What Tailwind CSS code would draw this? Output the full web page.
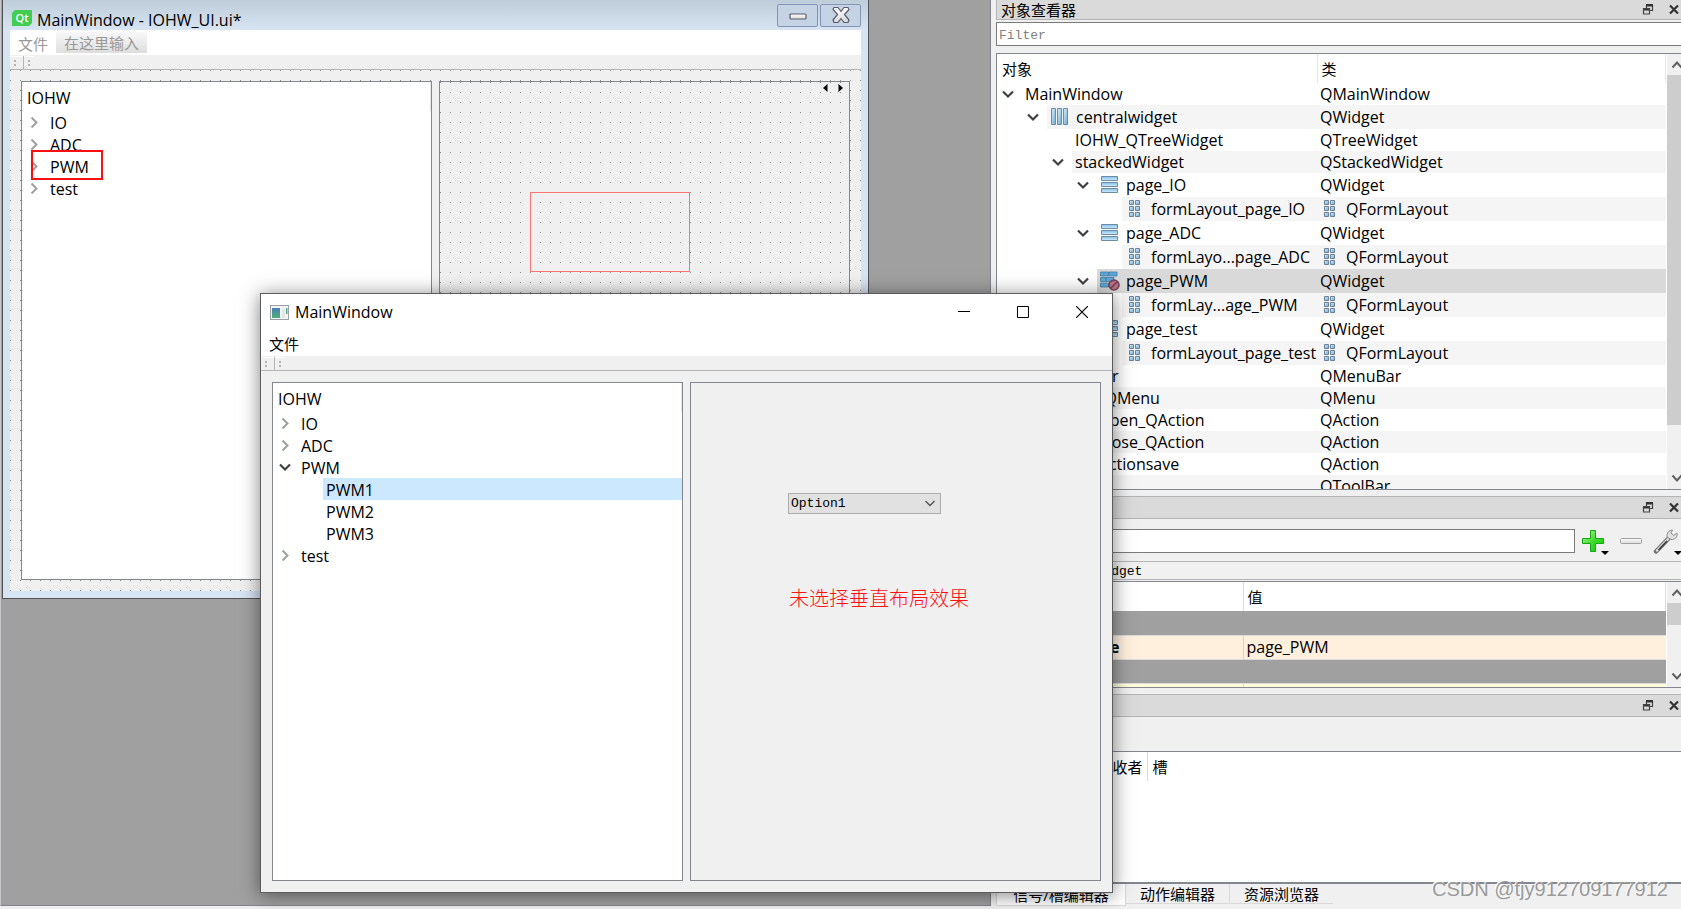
<!DOCTYPE html>
<html lang="zh-CN">
<head>
<meta charset="utf-8">
<title>Qt Designer</title>
<script src="https://cdn.jsdelivr.net/npm/@tailwindcss/browser@4"></script>
</head>
<body class="h-screen overflow-hidden bg-[#f0f0f0] font-['Open_Sans','Noto_Sans_CJK_SC',sans-serif] text-base leading-5 text-black">
<svg class="absolute h-0 w-0" aria-hidden="true">
  <defs>
    <linearGradient id="blueV" x1="0" y1="0" x2="0" y2="1"><stop offset="0" stop-color="#7cc0ea"/><stop offset="1" stop-color="#d4edfa"/></linearGradient>
    <linearGradient id="blueH" x1="0" y1="0" x2="1" y2="1"><stop offset="0" stop-color="#d6effc"/><stop offset="1" stop-color="#6eabd6"/></linearGradient>
    <linearGradient id="green" x1="0" y1="0" x2="1" y2="1"><stop offset="0" stop-color="#c4f5b4"/><stop offset=".5" stop-color="#3fdc2c"/><stop offset="1" stop-color="#0cc80a"/></linearGradient>
    <linearGradient id="metal" x1="0" y1="0" x2="0" y2="1"><stop offset="0" stop-color="#ffffff"/><stop offset="1" stop-color="#d9d9d9"/></linearGradient>
    <linearGradient id="app" x1="0" y1="0" x2="0" y2="1"><stop offset="0" stop-color="#4a7fb5"/><stop offset="1" stop-color="#4fae7b"/></linearGradient>
  </defs>
  <symbol id="right" viewBox="0 0 12 12"><path d="M3.500 1.500l5 5-5 5" fill="none" stroke="#a0a0a0" stroke-width="2"/></symbol>
  <symbol id="down" viewBox="0 0 12 12"><path d="M1 3.500l5 5 5-5" fill="none" stroke="#404040" stroke-width="2.200"/></symbol>
  <symbol id="sup" viewBox="0 0 12 12"><path d="M1.500 8.500l4.500-5 4.500 5" fill="none" stroke="#606060" stroke-width="2"/></symbol>
  <symbol id="sdown" viewBox="0 0 12 12"><path d="M1.500 2.500l4.500 5 4.500-5" fill="none" stroke="#606060" stroke-width="2"/></symbol>
  <symbol id="hbox" viewBox="0 0 20 20"><g fill="url(#blueH)" stroke="#6f8aa5"><path d="M1.500 1.500h4v16h-4z"/><path d="M7.500 1.500h4v16h-4z"/><path d="M13.500 1.500h4v16h-4z"/></g></symbol>
  <symbol id="vbox" viewBox="0 0 20 20"><g fill="url(#blueV)" stroke="#6f8aa5"><path d="M1.500 1.500h16v4h-16z"/><path d="M1.500 7.500h16v4h-16z"/><path d="M1.500 13.500h16v4h-16z"/></g></symbol>
  <symbol id="form" viewBox="0 0 20 20"><g fill="url(#blueH)" stroke="#6d8299"><path d="M4.500 1.500h4v4h-4z"/><path d="M10.500 1.500h4v4h-4z"/><path d="M4.500 7.500h4v4h-4z"/><path d="M10.500 7.500h4v4h-4z"/><path d="M4.500 13.500h4v4h-4z"/><path d="M10.500 13.500h4v4h-4z"/></g></symbol>
  <symbol id="nolayout" viewBox="0 0 20 20"><g fill="#58a9de" stroke="#4a7899" stroke-width=".8"><path d="M.5 1h8v4h-8zM9 1h8v4H9zM.5 6.500h5v4h-5zM6 6.500h8v4H6zM.5 12h8v4h-8z"/></g><circle cx="14" cy="14" r="5" fill="#a8516a" fill-opacity=".75" stroke="#7b4358" stroke-width="1.600"/><path d="M10.500 17.500l7-7" stroke="#75405a" stroke-width="1.600"/></symbol>
  <symbol id="float" viewBox="0 0 12 12"><path d="M4.500 4V1.500h6v5H8" fill="none" stroke="#444" stroke-width="1.200"/><path d="M4 0h7v2.500H4zM1 4h7v2.500H1z" fill="#333"/><path d="M1.500 4.500h6v5.500h-6z" fill="none" stroke="#444" stroke-width="1.200"/></symbol>
  <symbol id="x" viewBox="0 0 12 12"><path d="M2 1.500l8 8M10 1.500l-8 8" stroke="#333" stroke-width="2.200"/></symbol>
</svg>

<div class="relative flex h-full w-full">
  <!-- Form editor area -->
  <main class="relative mb-[3px] min-w-0 flex-1 border-r border-b border-l border-[#82828c] border-l-[#c8c8cc] bg-[#a0a0a0]">
    <section class="absolute top-0 left-px flex h-[599px] w-[867px] flex-col border border-t-0 border-[#50545a] bg-[#d7e4f2] px-[7px] pb-[7px]">
      <header class="-mx-[7px] flex h-[30px] shrink-0 items-center bg-linear-to-b from-[#bfccda] to-[#d7e4f1] pr-[7px] pl-[9px]">
        <svg class="mt-[6px] h-4 w-5" viewBox="0 0 20 16"><path d="M3 0h17v13l-3 3H0V3z" fill="#41cd52"/><text x="3.500" y="12" font-family="Open Sans" font-weight="600" font-size="11" fill="#fff">Qt</text></svg>
        <h1 class="mt-[9px] ml-[5px] flex-1">MainWindow - IOHW_UI.ui*</h1>
        <div class="flex gap-[2px]">
          <button aria-label="最小化" class="flex h-[23px] w-[41px] items-center justify-center rounded-xs border border-[#8494b4] bg-[#c5d3e4]"><svg class="mt-1 h-2 w-[18px]" viewBox="0 0 18 8"><rect x="1" y="1" width="16" height="5" rx="1" fill="url(#metal)" stroke="#585c6c" stroke-width="1.200"/></svg></button>
          <button aria-label="关闭" class="flex h-[23px] w-[41px] items-center justify-center rounded-xs border border-[#8494b4] bg-[#c5d3e4]"><svg class="h-[18px] w-[18px]" viewBox="0 0 18 18"><path d="M2 1.500h4l3 4 3-4h4l1 2-4.500 5L17 14l-1 2.500h-4l-3-4-3 4H2L1 14l4.500-5.500L1 3.500z" fill="url(#metal)" stroke="#585c6c" stroke-width="1.200" stroke-linejoin="round"/></svg></button>
        </div>
      </header>
      <nav class="flex h-[25px] shrink-0 items-center gap-2 bg-white px-2 text-[15px] text-[#999]">
        <button class="mt-[2px]">文件</button>
        <button class="h-[21px] bg-linear-to-b from-[#f8f8f8] to-[#dedede] px-2 pt-[2px] leading-[17px]">在这里输入</button>
      </nav>
      <div class="flex h-[15px] shrink-0 border-t border-b border-t-[#f0f0f0] border-b-[#b5b5b5] bg-[#f0f0f0]">
        <svg class="h-[13px] w-6" viewBox="0 0 24 13"><path d="M0 .5h24" stroke="#fff"/><path d="M4 4h2v2H4zM4 8h2v2H4zM18 4h2v2h-2zM18 8h2v2h-2z" fill="#b4b4b4"/><path d="M13.500 0v13" stroke="#b4b4b4"/></svg>
      </div>
      <div class="grid min-h-0 flex-1 grid-cols-2 gap-[7px] bg-[#f0f0f0] bg-[conic-gradient(at_1px_1px,transparent_75%,#8c8c8c_0)] bg-[size:10px_10px] p-[11px]">
        <div class="relative border border-[#828790] bg-white">
          <h2 class="flex h-[29px] items-center border-r border-[#e5e5e5] px-[5px] pt-[2px]">IOHW</h2>
          <ul role="tree" aria-label="IOHW" data-tree="designer"></ul>
          <div class="absolute top-[68px] left-[9px] h-[30px] w-[72px] border-2 border-[#f81010]"></div>
        </div>
        <div class="relative border border-[#828790] bg-[#f0f0f0] bg-[conic-gradient(at_1px_1px,transparent_75%,#8c8c8c_0)] bg-[size:10px_10px]">
          <div class="flex justify-end gap-[10px] pt-[2px] pr-[6px]">
            <button aria-label="上一页"><svg class="h-2 w-[5px]" viewBox="0 0 5 8"><path d="M4.500 0v8L0 4z"/></svg></button>
            <button aria-label="下一页"><svg class="h-2 w-[5px]" viewBox="0 0 5 8"><path d="M.5 0v8L5 4z"/></svg></button>
          </div>
          <div class="absolute top-[110px] left-[90px] h-[80px] w-[160px] border border-[#ff7474]"></div>
        </div>
      </div>
    </section>
  </main>

  <!-- Docks -->
  <aside class="flex w-[690px] shrink-0 flex-col pl-[5px]">
    <header class="flex h-5 shrink-0 items-center border-b border-l border-[#b4b4b4] bg-[#dadada] pl-1 text-[15px]">
      <h2 class="flex-1 leading-[18px]">对象查看器</h2>
      <button aria-label="浮动" class="mr-[14px]"><svg class="h-3 w-3"><use href="#float"/></svg></button>
      <button aria-label="关闭" class="mr-px"><svg class="h-3 w-3"><use href="#x"/></svg></button>
    </header>
    <input aria-label="Filter" placeholder="Filter" class="mt-[2px] h-6 w-full shrink-0 border border-r-0 border-[#7a7a7a] bg-white px-[2px] pt-[2px] font-['Liberation_Mono',monospace] text-[13px] placeholder:text-[#808080]">
    <div class="mt-[7px] flex min-h-0 flex-1 border border-r-0 border-[#828790] bg-white">
      <div class="min-w-0 flex-1 overflow-hidden">
        <table class="w-full table-fixed border-collapse text-left">
          <colgroup><col class="w-[320px]"><col></colgroup>
          <thead class="text-[15px]"><tr class="h-[29px]">
            <th class="border-r border-[#e5e5e5] pt-px pl-[5px] font-normal">对象</th>
            <th class="border-r border-[#e5e5e5] pt-px pl-1 font-normal">类</th>
          </tr></thead>
          <tbody id="objects"></tbody>
        </table>
      </div>
      <div class="ml-px flex w-[14px] flex-col overflow-hidden bg-[#f0f0f0]">
        <button aria-label="向上滚动" class="h-[21px] shrink-0 pl-1"><svg class="h-3 w-3"><use href="#sup"/></svg></button>
        <div class="h-[350px] bg-[#cdcdcd]"></div>
        <div class="flex-1"></div>
        <button aria-label="向下滚动" class="h-[21px] shrink-0 pl-1"><svg class="h-3 w-3"><use href="#sdown"/></svg></button>
      </div>
    </div>

    <header class="mt-[6px] flex h-[23px] shrink-0 items-center justify-end border border-r-0 border-[#b4b4b4] bg-[#dadada]">
      <button aria-label="浮动" class="mr-[14px]"><svg class="h-3 w-3"><use href="#float"/></svg></button>
      <button aria-label="关闭" class="mr-px"><svg class="h-3 w-3"><use href="#x"/></svg></button>
    </header>
    <div class="mt-[10px] flex h-6 shrink-0">
      <input aria-label="属性过滤" class="min-w-0 flex-1 border border-[#7a7a7a] bg-white px-1">
      <button aria-label="添加属性" class="ml-[6px]"><svg class="h-[26px] w-[30px]" viewBox="0 0 30 26"><path d="M9.500 1.500h5v8h8v5h-8v8h-5v-8h-8v-5h8z" fill="url(#green)" stroke="#12a812"/><path d="M20 22h8l-4 4z"/></svg></button>
      <button aria-label="删除属性" class="ml-[8px]"><svg class="h-6 w-6" viewBox="0 0 24 24"><rect x="1.500" y="9.500" width="21" height="5" rx="1" fill="url(#metal)" stroke="#a2a2a2"/></svg></button>
      <button aria-label="配置" class="ml-[10px]"><svg class="h-[26px] w-[28px]" viewBox="0 0 28 26"><path d="M3 22.500L15.500 9.500" stroke="#707070" stroke-width="4.500" stroke-linecap="round"/><path d="M4 21.500L16 9" stroke="#dedede" stroke-width="2.500" stroke-linecap="round"/><path d="M5.500 21L14 12" stroke="#333" stroke-width="1.500"/><path d="M14 8c-.5-4 2-7 5.500-7L18 4l2.500 2.500L24 4c1 3.500-2 7-6 6.500z" fill="#e0e0e0" stroke="#8a8a8a"/><path d="M21 22h8l-4 4z"/></svg></button>
    </div>
    <div class="mt-[8px] h-[19px] shrink-0 border border-r-0 border-[#b4b4b4] bg-[#f1f1f1] pt-px pl-[5px] font-['Liberation_Mono',monospace] text-[13px] leading-[18px]">page_PWM : QWidget</div>
    <div class="mt-px flex h-[107px] shrink-0 border border-r-0 border-[#828790] bg-white">
      <div class="min-w-0 flex-1 overflow-hidden">
        <table class="w-full table-fixed border-collapse text-left">
          <colgroup><col class="w-[246px]"><col></colgroup>
          <thead class="text-[15px]"><tr class="h-[29px]">
            <th class="border-r border-[#dcdcdc] pt-px pl-[5px] font-normal">属性</th>
            <th class="border-r border-[#dcdcdc] pt-px pl-1 font-normal">值</th>
          </tr></thead>
          <tbody>
            <tr class="h-6 border-b border-[#dcdcdc] bg-[#a0a0a0] font-bold text-white"><td colspan="2" class="pl-5">QObject</td></tr>
            <tr class="h-6 border-b border-[#dcdcdc] bg-[#fff0de]"><td class="border-r border-[#d8d2cc] pl-[25px] font-bold">objectName</td><td class="pl-[3px]">page_PWM</td></tr>
            <tr class="h-6 border-b border-[#dcdcdc] bg-[#a0a0a0] font-bold text-white"><td colspan="2" class="pl-5">QWidget</td></tr>
            <tr class="h-6 bg-[#ffffdc]"><td class="border-r border-[#dcdcdc]"></td><td></td></tr>
          </tbody>
        </table>
      </div>
      <div class="ml-px flex w-[14px] flex-col overflow-hidden bg-[#f0f0f0]">
        <button aria-label="向上滚动" class="h-[21px] shrink-0 pl-1"><svg class="h-3 w-3"><use href="#sup"/></svg></button>
        <div class="h-[22px] bg-[#cdcdcd]"></div>
        <div class="flex-1"></div>
        <button aria-label="向下滚动" class="h-[21px] shrink-0 pl-1"><svg class="h-3 w-3"><use href="#sdown"/></svg></button>
      </div>
    </div>

    <header class="mt-[6px] flex h-[23px] shrink-0 items-center justify-end border border-r-0 border-[#b4b4b4] bg-[#dadada]">
      <button aria-label="浮动" class="mr-[14px]"><svg class="h-3 w-3"><use href="#float"/></svg></button>
      <button aria-label="关闭" class="mr-px"><svg class="h-3 w-3"><use href="#x"/></svg></button>
    </header>
    <div class="mt-[34px] h-[133px] shrink-0 border border-r-0 border-b-2 border-[#828790] bg-white">
      <table class="text-left text-[15px]"><thead><tr class="h-[29px]">
        <th class="w-[94px] border-r border-[#dcdcdc]"></th>
        <th class="w-[56px] border-r border-[#dcdcdc] pt-px pr-1 text-right font-normal whitespace-nowrap">接收者</th>
        <th class="pt-px pl-[5px] font-normal">槽</th>
      </tr></thead></table>
    </div>
    <div role="tablist" class="flex h-[25px] shrink-0 items-start text-[15px] leading-[18px]">
      <button role="tab" aria-selected="true" class="h-[22px] w-[130px] border border-t-0 border-[#d9d9d9] bg-white">信号/槽编辑器</button>
      <button role="tab" class="h-5 w-[104px] border-r border-b border-[#d9d9d9]">动作编辑器</button>
      <button role="tab" class="h-5 w-[103px] border-b border-[#d9d9d9]">资源浏览器</button>
    </div>
  </aside>

  <!-- Running application -->
  <section class="absolute top-[293px] left-[260px] flex h-[600px] w-[853px] flex-col border border-[#5c5c5c] bg-[#f0f0f0] shadow-[0_2px_18px_rgba(0,0,0,0.5)]">
    <header class="flex h-9 shrink-0 items-center bg-white pr-px pl-[9px]">
      <svg class="h-[15px] w-[19px]" viewBox="0 0 19 15"><rect x=".5" y=".5" width="18" height="14" fill="#f4f4f4" stroke="#9aa0a6"/><path d="M2 3h8v10H2z" fill="url(#app)"/><path d="M12 3h3v10h-3z" fill="#e4e6e8"/><path d="M16 3h1.500v6H16z" fill="#5aa58c"/></svg>
      <h1 class="ml-[6px] flex-1">MainWindow</h1>
      <button aria-label="最小化" class="flex w-[59px] justify-center"><svg class="h-3 w-3" viewBox="0 0 12 12"><path d="M0 5.500h12" stroke="#000"/></svg></button>
      <button aria-label="最大化" class="flex w-[59px] justify-center"><svg class="h-3 w-3" viewBox="0 0 12 12"><path d="M.5 .5h11v11H.5z" fill="none" stroke="#000"/></svg></button>
      <button aria-label="关闭" class="flex w-[59px] justify-center"><svg class="h-3 w-3" viewBox="0 0 12 12"><path d="M0 0l12 12M12 0L0 12" stroke="#000" stroke-width="1.200"/></svg></button>
    </header>
    <nav class="flex h-[26px] shrink-0 items-center bg-white px-2 pt-[2px] text-[15px]"><button>文件</button></nav>
    <div class="flex h-[15px] shrink-0 border-t border-b border-t-[#f0f0f0] border-b-[#b5b5b5]">
      <svg class="h-[13px] w-6" viewBox="0 0 24 13"><path d="M0 .5h24" stroke="#fff"/><path d="M4 4h2v2H4zM4 8h2v2H4zM18 4h2v2h-2zM18 8h2v2h-2z" fill="#b4b4b4"/><path d="M13.500 0v13" stroke="#b4b4b4"/></svg>
    </div>
    <div class="grid min-h-0 flex-1 grid-cols-2 gap-[7px] p-[11px]">
      <div class="border border-[#828790] bg-white">
        <h2 class="flex h-[29px] items-center border-r border-[#e5e5e5] px-[5px] pt-[2px]">IOHW</h2>
        <ul role="tree" aria-label="IOHW" data-tree="app"></ul>
      </div>
      <div class="border border-[#828790] pt-[110px] pl-[97px]">
        <div class="relative w-[153px]">
          <select aria-label="选项" class="block h-[21px] w-full appearance-none border border-[#adadad] bg-[#e1e1e1] px-[2px] pt-px font-['Liberation_Mono',monospace] text-[13px] leading-[18px]"><option>Option1</option></select>
          <svg class="pointer-events-none absolute top-1 right-[5px] h-3 w-3" viewBox="0 0 12 12"><path d="M1.500 4l4.500 4.500L10.500 4" fill="none" stroke="#505050" stroke-width="1.300"/></svg>
        </div>
        <p class="mt-[73px] pl-px text-xl leading-6 font-light text-[#ff1010]">未选择垂直布局效果</p>
      </div>
    </div>
  </section>

  <div class="absolute right-[13px] bottom-[8px] text-xl leading-6 text-[#9a9a9a] font-['Liberation_Sans',sans-serif] [text-shadow:-1px_-1px_0_#ffffff]">CSDN @tjy912709177912</div>
</div>

<script>
const chevron = (state) =>
  state === 'open' ? '<svg class="h-3 w-3"><use href="#down"/></svg>' :
  state === 'closed' ? '<svg class="h-3 w-3"><use href="#right"/></svg>' : '';

const trees = {
  designer: [[0, 'IO', 'closed'], [0, 'ADC', 'closed'], [0, 'PWM', 'closed'], [0, 'test', 'closed']],
  app: [[0, 'IO', 'closed'], [0, 'ADC', 'closed'], [0, 'PWM', 'open'], [1, 'PWM1', '', true], [1, 'PWM2', ''], [1, 'PWM3', ''], [0, 'test', 'closed']],
};
document.querySelectorAll('[data-tree]').forEach((ul) => {
  ul.innerHTML = trees[ul.dataset.tree].map(([level, label, state, selected]) => `
    <li role="treeitem" class="flex h-[22px]" style="padding-left:${level * 25}px">
      <span class="flex w-[25px] items-center pl-[6px]">${chevron(state)}</span>
      <span class="h-[22px] flex-1 pl-[3px] leading-6 ${selected ? 'bg-[#cce8ff]' : ''}">${label}</span>
    </li>`).join('');
});

// level, name, class, expanded, icon
const objects = [
  [0, 'MainWindow', 'QMainWindow', 'open'],
  [1, 'centralwidget', 'QWidget', 'open', 'hbox'],
  [2, 'IOHW_QTreeWidget', 'QTreeWidget', ''],
  [2, 'stackedWidget', 'QStackedWidget', 'open'],
  [3, 'page_IO', 'QWidget', 'open', 'vbox'],
  [4, 'formLayout_page_IO', 'QFormLayout', '', 'form'],
  [3, 'page_ADC', 'QWidget', 'open', 'vbox'],
  [4, 'formLayo...page_ADC', 'QFormLayout', '', 'form'],
  [3, 'page_PWM', 'QWidget', 'open', 'nolayout'],
  [4, 'formLay...age_PWM', 'QFormLayout', '', 'form'],
  [3, 'page_test', 'QWidget', 'open', 'vbox'],
  [4, 'formLayout_page_test', 'QFormLayout', '', 'form'],
  [1, 'menubar', 'QMenuBar', 'open'],
  [2, 'file_QMenu', 'QMenu', 'open'],
  [3, 'open_QAction', 'QAction', ''],
  [3, 'close_QAction', 'QAction', ''],
  [3, 'actionsave', 'QAction', ''],
  [1, 'toolBar', 'QToolBar', ''],
];
const icon = (name) => name ? `<svg class="mr-[6px] h-5 w-5 shrink-0"><use href="#${name}"/></svg>` : '';
document.getElementById('objects').innerHTML = objects.map(([level, name, cls, state, ic], i) => {
  const bg = name === 'page_PWM' ? 'bg-[#d9d9d9]' : i % 2 ? 'bg-[#f5f5f5]' : 'bg-white';
  const h = ic ? 'h-6' : 'h-[22px]';
  return `<tr>
    <td class="p-0"><div class="flex ${h}" style="padding-left:${level * 25}px">
      <span class="flex w-[25px] shrink-0 items-center pl-[5px]">${chevron(state)}</span>
      <span class="flex min-w-0 flex-1 items-center pl-[3px] whitespace-nowrap ${bg}">${icon(ic)}${name}</span>
    </div></td>
    <td class="p-0"><div class="flex items-center pl-[3px] ${h} ${bg}">${icon(ic === 'form' ? 'form' : '')}${cls}</div></td>
  </tr>`;
}).join('');
</script>
</body>
</html>
